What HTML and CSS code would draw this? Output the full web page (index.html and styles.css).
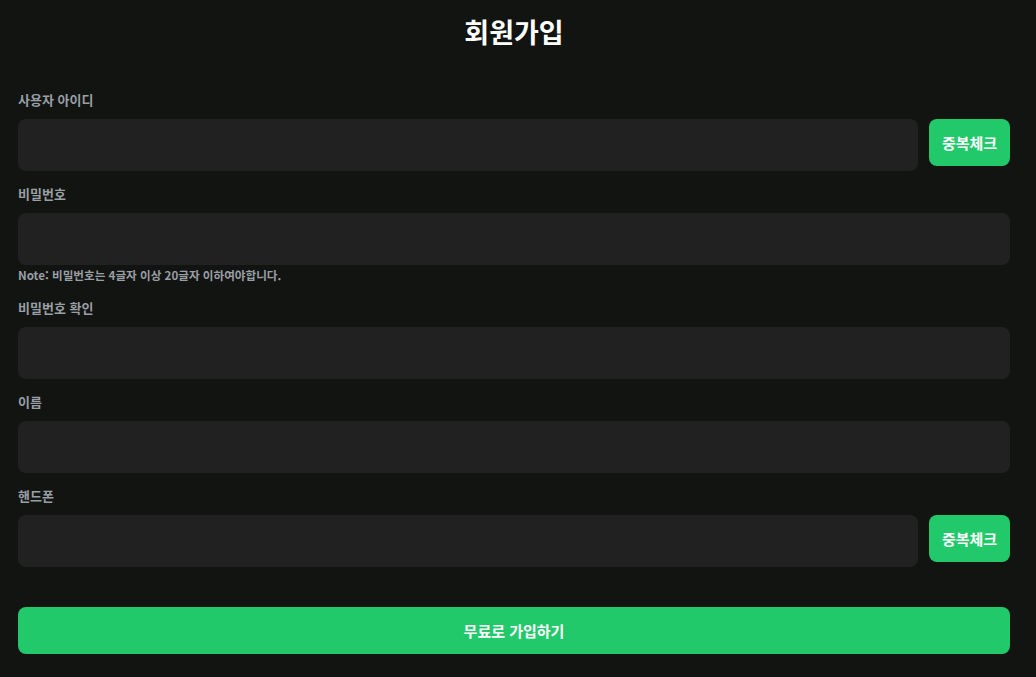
FILE: index.html
```html
<!DOCTYPE html>
<html lang="ko">
<head>
  <meta charset="UTF-8">
  <meta name="viewport" content="width=device-width, initial-scale=1.0">
  <title>회원가입</title>
  <link rel="stylesheet" href="styles.css">
</head>
<body>
  <div class="container">
    <h1 class="title">회원가입</h1>

    <form class="signup-form">
      <!-- 아이디 -->
      <div class="field">
        <label class="label" for="userId">사용자 아이디</label>
        <div class="row">
          <input class="input" id="userId" type="text">
          <button type="button" class="check-btn">중복체크</button>
        </div>
      </div>

      <!-- 비밀번호 -->
      <div class="field">
        <label class="label" for="pw">비밀번호</label>
        <input class="input" id="pw" type="password">
        <p class="note">Note: 비밀번호는 4글자 이상 20글자 이하여야합니다.</p>
      </div>

      <div class="field">
        <label class="label" for="pw2">비밀번호 확인</label>
        <input class="input" id="pw2" type="password">
      </div>

      <div class="field">
        <label class="label" for="name">이름</label>
        <input class="input" id="name" type="text">
      </div>

      <!-- 핸드폰 -->
      <div class="field">
        <label class="label" for="phone">핸드폰</label>
        <div class="row">
          <input class="input" id="phone" type="text">
          <button type="button" class="check-btn">중복체크</button>
        </div>
      </div>

      <button type="submit" class="submit-btn">무료로 가입하기</button>
    </form>
  </div>
</body>
</html>
```

FILE: styles.css
```css
/* Basic styles */
* {
    box-sizing: border-box;
}
body {
    margin: 0;
    background: #111411;
    color: #fff;
    font-family: "Noto Sans CJK KR", "Noto Sans", sans-serif;
}
.container {
    width: 992px;
    margin-left: 18px;
}
.title {
    margin: 0;
    padding-top: 13px;
    height: 90px;
    text-align: center;
    font-size: 27px;
    line-height: 38px;
    font-weight: 700;
}

/* Form */
.field {
    margin-bottom: 13px;
}
.label {
    display: block;
    font-size: 13px;
    line-height: 20px;
    font-weight: 700;
    color: #9a9fa6;
    margin-bottom: 9px;
}
.row {
    display: flex;
    align-items: flex-start;
    gap: 11px;
}
.input {
    display: block;
    width: 100%;
    height: 52px;
    border: none;
    border-radius: 8px;
    background: #212121;
    color: #fff;
    padding: 0 14px;
    font-family: inherit;
    font-size: 15px;
    outline: none;
}
.row .input {
    flex: 1;
}
.note {
    margin: 2px 0 0;
    padding-bottom: 2px;
    font-size: 11.6px;
    line-height: 16px;
    font-weight: 700;
    color: #9a9fa6;
}
.check-btn {
    flex: none;
    width: 81px;
    height: 47px;
    border: none;
    border-radius: 8px;
    background: #22c96a;
    color: #fff;
    font-family: inherit;
    font-size: 15px;
    font-weight: 700;
    cursor: pointer;
}
.submit-btn {
    display: block;
    width: 100%;
    height: 47px;
    margin-top: 40px;
    border: none;
    border-radius: 8px;
    background: #22c96a;
    color: #fff;
    font-family: inherit;
    font-size: 15px;
    font-weight: 700;
    cursor: pointer;
}
```
